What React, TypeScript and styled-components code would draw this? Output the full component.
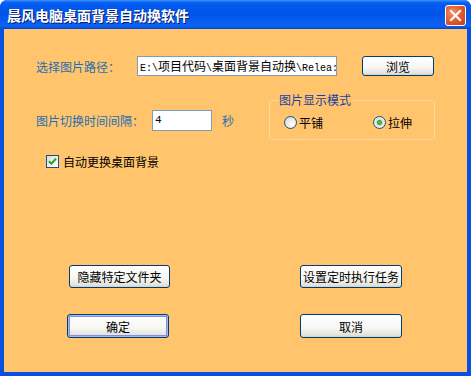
import React from "react";
import styled, { createGlobalStyle } from "styled-components";

const GlobalStyle = createGlobalStyle`
  html, body {
    margin: 0;
    padding: 0;
    background: #ffffff;
  }
  body {
    font-family: "Noto Sans CJK SC", "Liberation Sans", sans-serif;
    font-size: 12px;
  }
`;

const App = () => {
  return (
    <>
      <GlobalStyle />
      <Window>
        <TitleBar>
          <Title>晨风电脑桌面背景自动换软件</Title>
          <CloseButton>
            <svg width="13" height="13" viewBox="0 0 13 13">
              <path d="M2 2 L11 11 M11 2 L2 11" stroke="#fff" strokeWidth="2.2" strokeLinecap="square" />
            </svg>
          </CloseButton>
        </TitleBar>
        <Body>
          <PathRow>
            <Label>选择图片路径：</Label>
            <PathInput>
              <Mono>E:\</Mono>项目代码<Mono>\</Mono>桌面背景自动换<Mono>\Relea:</Mono>
            </PathInput>
            <Button $width={72} $height={20} $gap={25}>浏览</Button>
          </PathRow>
          <MiddleRow>
            <IntervalRow>
              <Label $width={116}>图片切换时间间隔：</Label>
              <NumberInput>4</NumberInput>
              <Unit>秒</Unit>
            </IntervalRow>
            <ModeGroup>
              <Legend>图片显示模式</Legend>
              <RadioRow>
                <RadioItem $width={89}>
                  <Radio />
                  <span>平铺</span>
                </RadioItem>
                <RadioItem>
                  <Radio $checked />
                  <span>拉伸</span>
                </RadioItem>
              </RadioRow>
            </ModeGroup>
          </MiddleRow>
          <CheckRow>
            <CheckBox>
              <svg width="9" height="9" viewBox="0 0 9 9">
                <path d="M1 4.2 L3.4 6.6 L8 1.6" fill="none" stroke="#21a121" strokeWidth="2" />
              </svg>
            </CheckBox>
            <span>自动更换桌面背景</span>
          </CheckRow>
          <ButtonRow $top={95} $left={69}>
            <Button $width={101} $height={23}>隐藏特定文件夹</Button>
            <Button $width={102} $height={23} $gap={130}>设置定时执行任务</Button>
          </ButtonRow>
          <ButtonRow $top={26} $left={67}>
            <Button $width={102} $height={24} $default>确定</Button>
            <Button $width={102} $height={24} $gap={131}>取消</Button>
          </ButtonRow>
        </Body>
      </Window>
    </>
  );
};

export default App;

const Window = styled.div`
  width: 471px;
  height: 376px;
  display: flex;
  flex-direction: column;
  background: #0a4fdf;
  border-radius: 7px 7px 0 0;
  overflow: hidden;
`;

const TitleBar = styled.div`
  height: 29px;
  flex-shrink: 0;
  display: flex;
  align-items: center;
  padding: 0 5px 0 7px;
  background: linear-gradient(
    180deg,
    #3d95ff 0%,
    #0a63f0 8%,
    #0058ee 20%,
    #0055e8 50%,
    #0a5ff2 80%,
    #0b62f4 90%,
    #0047d6 100%
  );
`;

const Title = styled.div`
  flex: 1;
  color: #ffffff;
  font-size: 14px;
  font-weight: bold;
  text-shadow: 1px 1px 0 #0a1c68;
  line-height: 16px;
`;

const CloseButton = styled.div`
  width: 19px;
  height: 19px;
  display: flex;
  align-items: center;
  justify-content: center;
  border: 1px solid #ffffff;
  border-radius: 3px;
  background: radial-gradient(circle at 35% 35%, #f2926c 0%, #e05a32 50%, #c33c16 100%);
  margin-top: 1px;
`;

const Body = styled.div`
  flex: 1;
  margin: 0 4px 4px 4px;
  background: #ffc46c;
  display: flex;
  flex-direction: column;
  padding-left: 32px;
`;

const PathRow = styled.div`
  display: flex;
  align-items: center;
  margin-top: 27px;
  height: 20px;
`;

const Label = styled.div<{ $width?: number }>`
  width: ${(p) => p.$width ?? 101}px;
  color: #1e6fb4;
  white-space: nowrap;
`;

const PathInput = styled.div`
  width: 196px;
  height: 18px;
  border: 1px solid #7f9db9;
  background: #ffffff;
  color: #000000;
  font-size: 12px;
  line-height: 18px;
  padding-left: 2px;
  box-sizing: content-box;
  white-space: nowrap;
  overflow: hidden;
`;

const Mono = styled.span`
  font-family: "Liberation Mono", monospace;
  font-size: 10px;
`;

const Button = styled.div<{ $width: number; $height: number; $gap?: number; $default?: boolean }>`
  width: ${(p) => p.$width}px;
  height: ${(p) => p.$height}px;
  margin-left: ${(p) => p.$gap ?? 0}px;
  box-sizing: border-box;
  display: flex;
  align-items: center;
  justify-content: center;
  border: 1px solid #003c74;
  border-radius: 3px;
  background: linear-gradient(180deg, #ffffff 0%, #f6f6f2 60%, #e4e3dc 90%, #d6d0c5 100%);
  box-shadow: ${(p) =>
    p.$default ? "inset 0 0 0 1px #a9b9f0, inset 0 0 0 2px #7f8fe0" : "none"};
  color: #000000;
  white-space: nowrap;
`;

const MiddleRow = styled.div`
  display: flex;
  margin-top: 17px;
`;

const IntervalRow = styled.div`
  display: flex;
  align-items: center;
  height: 21px;
  margin-top: 17px;
`;

const NumberInput = styled.div`
  width: 56px;
  height: 19px;
  border: 1px solid #7f9db9;
  background: #ffffff;
  font-family: "Liberation Mono", monospace;
  font-size: 11px;
  line-height: 19px;
  padding-left: 2px;
`;

const Unit = styled.div`
  color: #1e6fb4;
  margin-left: 10px;
`;

const ModeGroup = styled.fieldset`
  margin: 0 0 0 35px;
  padding: 0 0 0 14px;
  width: 166px;
  height: 47px;
  border: 1px solid #fbd9a2;
  border-radius: 3px;
  box-sizing: border-box;
`;

const Legend = styled.legend`
  padding: 0 1px;
  margin-left: -6px;
  color: #1a3fa6;
  font-size: 12px;
  line-height: 14px;
`;

const RadioRow = styled.div`
  display: flex;
  align-items: center;
  margin-top: 7px;
`;

const RadioItem = styled.div<{ $width?: number }>`
  display: flex;
  align-items: center;
  gap: 2px;
  width: ${(p) => (p.$width ? `${p.$width}px` : "auto")};
  color: #000000;
`;

const Radio = styled.div<{ $checked?: boolean }>`
  width: 11px;
  height: 11px;
  border: 1px solid #1c5180;
  border-radius: 50%;
  background: ${(p) =>
    p.$checked
      ? "radial-gradient(circle, #5fdc4f 0%, #21a121 25%, #dcdcd6 38%, #ffffff 100%)"
      : "radial-gradient(circle at 65% 65%, #ffffff 0%, #ecebe6 45%, #d2d1c9 100%)"};
`;

const CheckRow = styled.div`
  display: flex;
  align-items: center;
  gap: 4px;
  margin-top: 13px;
  margin-left: 10px;
  color: #000000;
`;

const CheckBox = styled.div`
  width: 11px;
  height: 11px;
  border: 1px solid #1c5180;
  background: linear-gradient(135deg, #dcdcd7 0%, #ffffff 100%);
  display: flex;
  align-items: center;
  justify-content: center;
`;

const ButtonRow = styled.div<{ $top: number; $left: number }>`
  display: flex;
  margin-top: ${(p) => p.$top}px;
  margin-left: ${(p) => p.$left - 36}px;
`;
